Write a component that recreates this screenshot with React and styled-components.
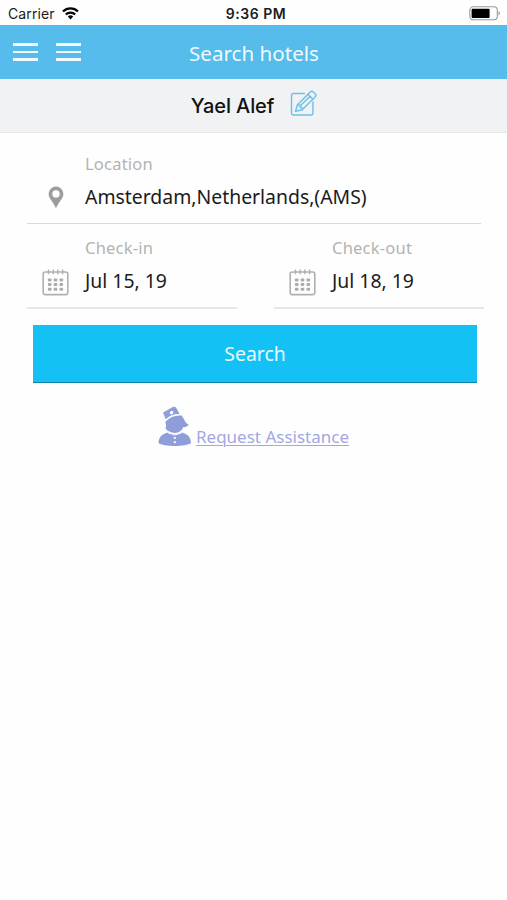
import React from 'react';
import styled, { createGlobalStyle } from 'styled-components';

const GlobalStyle = createGlobalStyle`
  * { box-sizing: border-box; }
  body { margin: 0; background: #fefefe; font-family: "Noto Sans", sans-serif; }
`;

const Screen = styled.div`
  width: 507px;
  height: 900px;
  background: #fefefe;
  overflow: hidden;
`;

const StatusBar = styled.div`
  display: grid;
  grid-template-columns: 1fr auto 1fr;
  align-items: center;
  height: 25px;
  padding: 2px 6px 0 8px;
  font-family: Inter, sans-serif;
  color: #1c1c1c;
`;

const Carrier = styled.div`
  display: flex;
  align-items: center;
  gap: 7px;
  font-size: 14px;
  line-height: 20px;
  letter-spacing: 0.1px;
`;

const Clock = styled.div`
  padding-left: 3px;
  font-size: 14px;
  line-height: 20px;
  font-weight: 600;
  letter-spacing: 0.5px;
`;

const BatterySlot = styled.div`
  display: flex;
  justify-content: flex-end;
`;

const Header = styled.header`
  display: grid;
  grid-template-columns: 1fr auto 1fr;
  align-items: center;
  height: 54px;
  padding: 0 12px 0 13px;
  background: #55bceb;
`;

const MenuGroup = styled.div`
  display: flex;
  gap: 18px;
`;

const MenuButton = styled.button`
  display: flex;
  flex-direction: column;
  gap: 5px;
  width: 25px;
  padding: 0;
  border: 0;
  background: none;
`;

const MenuLine = styled.span`
  height: 2.5px;
  background: #f4fcff;
`;

const Title = styled.h1`
  margin: 0;
  padding-top: 2px;
  font-size: 20.6px;
  line-height: 28px;
  font-weight: 400;
  color: #effaff;
`;

const GuestBar = styled.div`
  display: flex;
  justify-content: center;
  align-items: center;
  gap: 16px;
  height: 54px;
  padding-left: 1px;
  background: #f0f2f4;
  border-bottom: 1px solid #e5e6e8;
`;

const GuestName = styled.span`
  font-family: Inter, sans-serif;
  font-size: 20px;
  line-height: 28px;
  font-weight: 500;
  letter-spacing: -0.1px;
  color: #111;
`;

const EditSlot = styled.span`
  display: flex;
  padding-bottom: 4px;
`;

const Form = styled.form`
  padding: 20px 23px 0 27px;
`;

const FieldBox = styled.div`
  display: grid;
  grid-template-columns: 58px 1fr;
  height: ${(p) => p.$height}px;
  width: ${(p) => p.$width}px;
  grid-template-rows: 22px 1fr;
  border-bottom: ${(p) => p.$line}px solid ${(p) => (p.$line > 1 ? '#e6e6e6' : '#d9d9d9')};
`;

const FieldLabel = styled.label`
  grid-column: 2;
  font-size: 16.5px;
  line-height: 22px;
  letter-spacing: 0.22px;
  color: #b3b3b3;
`;

const FieldIcon = styled.div`
  display: flex;
  justify-content: center;
  align-items: flex-start;
  padding: ${(p) => p.$top}px 1px 0 0;
`;

const FieldValue = styled.div`
  padding-top: 9px;
  font-size: 19.4px;
  line-height: 26px;
  color: #1b1b1b;
  white-space: nowrap;
`;

const DateRow = styled.div`
  display: flex;
  justify-content: space-between;
  padding-top: 13px;
`;

const SearchButton = styled.button`
  display: block;
  width: 444px;
  height: 58px;
  margin: 16px 0 0 6px;
  padding: 0;
  border: 0;
  border-bottom: 1px solid #1083ad;
  background: #13c1f5;
  color: #e8faff;
  font-family: inherit;
  font-size: 19.4px;
`;

const Assistance = styled.div`
  display: flex;
  justify-content: center;
  gap: 4px;
  margin-top: 23px;
`;

const AssistanceLink = styled.a`
  margin-top: 19px;
  font-size: 17px;
  line-height: 24px;
  color: #a2a8df;
  text-decoration: underline;
  text-decoration-thickness: 1px;
  text-underline-offset: 2px;
`;

const WifiIcon = () => (
  <svg width="17" height="13" viewBox="0 0 17 13">
    <g fill="none" stroke="#050505" strokeWidth="2.3">
      <path d="M1 4.5a10.8 10.8 0 0 1 15 0" />
      <path d="M3.8 7.5a6.8 6.8 0 0 1 9.4 0" />
    </g>
    <path d="M8.5 12.5 5.8 9.6a4 4 0 0 1 5.4 0z" fill="#050505" />
  </svg>
);

const BatteryIcon = () => (
  <svg width="32" height="15" viewBox="0 0 32 15">
    <rect x=".8" y=".8" width="27.5" height="13" rx="3.5" fill="#fff" stroke="#999" strokeWidth="1.1" />
    <rect x="2.6" y="2.7" width="18" height="9.2" rx="1" fill="#000" />
    <path d="M29.6 5.2c1.6.6 1.6 3.6 0 4.2z" fill="#888" />
  </svg>
);

const EditIcon = () => (
  <svg width="27" height="27" viewBox="0 0 27 27" fill="none" stroke="#69c2ea" strokeWidth="1.4" strokeLinejoin="round" strokeLinecap="round">
    <path d="M14.5 3.5H3.2A1.7 1.7 0 0 0 1.5 5.2v18.1A1.7 1.7 0 0 0 3.2 25h18a1.7 1.7 0 0 0 1.7-1.7V12" />
    <path d="m5.5 21.2 2-6.5L20.2 2a2.2 2.2 0 0 1 3.1 0l1.8 1.8a2.2 2.2 0 0 1 0 3.1L12.2 19.7z" />
    <path d="m7.5 14.7 2.2.4.4 2.1 2 .4.1 2.1M18 4.2l5 5M20 6.2l-9.9 9.9" />
  </svg>
);

const PinIcon = () => (
  <svg width="16" height="23" viewBox="0 0 16 23">
    <path fillRule="evenodd" fill="#9d9d9d" d="M8 .5a7.4 7.4 0 0 0-7.4 7.4c0 4.7 5 8.2 7.4 14.3 2.4-6.1 7.4-9.6 7.4-14.3A7.4 7.4 0 0 0 8 .5zm0 3.7a3.7 3.7 0 1 1 0 7.400 3.700 3.700 0 0 1 0-7.400z" />
  </svg>
);

const dotColumns = [5.9, 11.7, 17.5];
const dotRows = [9.5, 14.1, 18.7];

const CalendarIcon = () => (
  <svg width="27" height="27" viewBox="0 0 27 27">
    <rect x="1.2" y="3" width="24.6" height="22.6" rx="2" fill="none" stroke="#b0b0b0" strokeWidth="1.6" />
    <path d="M6.5 .5v4.8M11.2 .5v4.8M15.9 .5v4.8M20.6 .5v4.8" stroke="#b0b0b0" strokeWidth="1.4" />
    {dotRows.map((y) =>
      dotColumns.map((x) => <rect key={`${x}-${y}`} x={x} y={y} width="3.6" height="3" rx=".8" fill="#acacac" />)
    )}
  </svg>
);

const AgentIcon = () => (
  <svg width="34" height="41" viewBox="0 0 34 41">
    <g fill="#8e9eda">
      <path d="M5 6.6 14.8 1.1c1.2-.6 2.500-.4 3.200.5l3.600 6.300C16 7.800 11.300 9.700 7.700 13.200z" />
      <path d="M7.300 15.900C12 10.800 17.500 8.900 23.800 9.600c2.700 3.800 2.700 6.600 6.900 9.200-1.200 2.100-3.400 2.500-5.400 2.300-1.300 3.700-4.600 5.800-8.200 5.800-4.200 0-7.900-1.800-9.700-4.600.9-2 .9-4.100-.1-6.400z" />
      <path d="M9.600 26.500C3.800 28 .8 31 .5 37c4.600 4 28 4 32.500 0-.3-6-3.200-9-9.100-10.500l-7.100 2z" />
    </g>
    <path d="m11.700 7 1.300-2.200 2.400.7L15 7.700l-2.400.7z" fill="#fff" />
    <path d="m9.700 26.700 7.100 2.400 7.100-2.400" fill="none" stroke="#fff" strokeWidth="1" />
    <rect x="15.700" y="30.900" width="2.200" height="1.900" rx=".6" fill="#fff" />
    <rect x="15.700" y="35.200" width="2.200" height="1.900" rx=".6" fill="#fff" />
  </svg>
);

const Hamburger = () => (
  <MenuButton type="button" aria-label="Menu">
    <MenuLine />
    <MenuLine />
    <MenuLine />
  </MenuButton>
);

const Field = ({ label, value, icon, iconTop, height, width, line }) => (
  <FieldBox $height={height} $width={width} $line={line}>
    <FieldLabel>{label}</FieldLabel>
    <FieldIcon $top={iconTop}>{icon}</FieldIcon>
    <FieldValue>{value}</FieldValue>
  </FieldBox>
);

export default function App() {
  return (
    <Screen>
      <GlobalStyle />
      <StatusBar>
        <Carrier>
          <span>Carrier</span>
          <WifiIcon />
        </Carrier>
        <Clock>9:36 PM</Clock>
        <BatterySlot>
          <BatteryIcon />
        </BatterySlot>
      </StatusBar>
      <Header>
        <MenuGroup>
          <Hamburger />
          <Hamburger />
        </MenuGroup>
        <Title>Search hotels</Title>
      </Header>
      <GuestBar>
        <GuestName>Yael Alef</GuestName>
        <EditSlot>
          <EditIcon />
        </EditSlot>
      </GuestBar>
      <Form>
        <Field label="Location" value="Amsterdam,Netherlands,(AMS)" icon={<PinIcon />} iconTop={11} height={71} width={454} line={1} />
        <DateRow>
          <Field label="Check-in" value="Jul 15, 19" icon={<CalendarIcon />} iconTop={10} height={72} width={210} line={2} />
          <Field label="Check-out" value="Jul 18, 19" icon={<CalendarIcon />} iconTop={10} height={72} width={210} line={2} />
        </DateRow>
        <SearchButton type="button">Search</SearchButton>
      </Form>
      <Assistance>
        <AgentIcon />
        <AssistanceLink>Request Assistance</AssistanceLink>
      </Assistance>
    </Screen>
  );
}
